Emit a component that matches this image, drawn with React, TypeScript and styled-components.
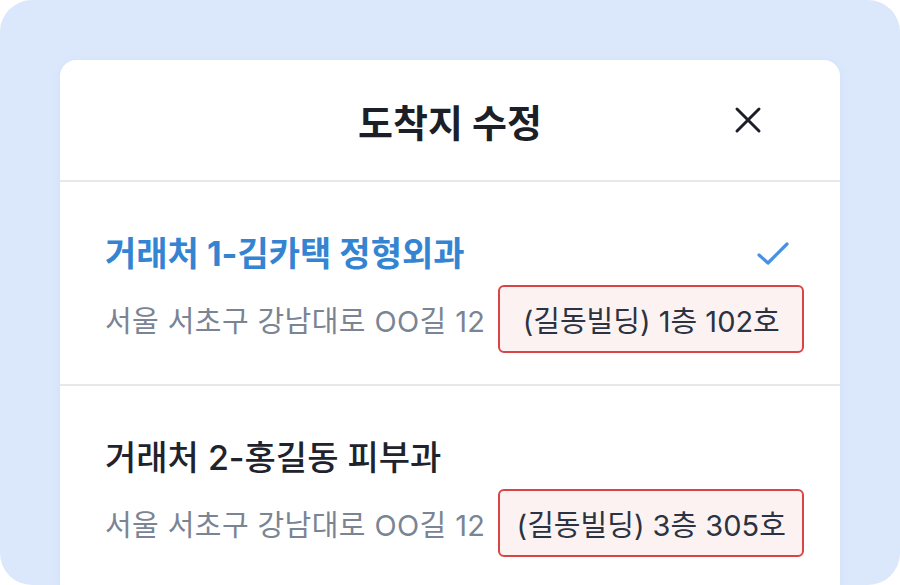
import React from 'react';
import styled, { createGlobalStyle } from 'styled-components';

const GlobalStyle = createGlobalStyle`
  html, body {
    margin: 0;
    padding: 0;
    background: #ffffff;
  }
  body {
    font-family: Inter, "Noto Sans CJK KR", sans-serif;
  }
`;

export const Frame = styled.div`
  width: 900px;
  height: 585px;
  box-sizing: border-box;
  background: #dbe8fc;
  border-radius: 32px;
  overflow: hidden;
  padding: 60px 60px 0 60px;
`;

export const Sheet = styled.div`
  height: 100%;
  background: #ffffff;
  border-radius: 16px 16px 0 0;
  box-shadow: 0 2px 10px rgba(90, 120, 170, 0.08);
  display: flex;
  flex-direction: column;
`;

export const SheetHeader = styled.div`
  height: 120px;
  flex-shrink: 0;
  display: flex;
  align-items: center;
  justify-content: center;
  position: relative;
  border-bottom: 2px solid #e6e8ec;
`;

export const SheetTitle = styled.h1`
  margin: 0;
  font-size: 38px;
  font-weight: 700;
  color: #1c1f27;
`;

export const CloseButton = styled.button`
  position: absolute;
  right: 75px;
  top: 50%;
  transform: translateY(-50%);
  width: 34px;
  height: 34px;
  padding: 0;
  border: none;
  background: transparent;
  display: flex;
  align-items: center;
  justify-content: center;
  cursor: pointer;
`;

export const Row = styled.div<{ $last?: boolean }>`
  padding: 52px 36px 31px 45px;
  display: flex;
  flex-direction: column;
  gap: 11px;
  border-bottom: ${p => (p.$last ? 'none' : '2px solid #e6e8ec')};
`;

export const RowTop = styled.div`
  display: flex;
  align-items: center;
  justify-content: space-between;
  height: 40px;
`;

export const PlaceName = styled.div<{ $active?: boolean }>`
  font-size: 34px;
  line-height: 40px;
  font-weight: ${p => (p.$active ? 700 : 500)};
  color: ${p => (p.$active ? '#3584d2' : '#1f232d')};
`;

export const CheckMark = styled.span`
  display: flex;
  margin-right: 14px;
`;

export const AddressLine = styled.div`
  display: flex;
  align-items: center;
  gap: 13px;
`;

export const Address = styled.span`
  font-size: 29px;
  letter-spacing: 0.4px;
  color: #7a8494;
  white-space: nowrap;
`;

export const DetailBadge = styled.span`
  box-sizing: border-box;
  width: 306px;
  height: 68px;
  display: flex;
  align-items: center;
  justify-content: center;
  background: #fdf2f2;
  border: 2px solid #d94545;
  border-radius: 6px;
  font-size: 29px;
  font-weight: 400;
  color: #2b3342;
  white-space: nowrap;
`;

type TPlace = {
  name: string;
  address: string;
  detail: string;
  active?: boolean;
};

const places: TPlace[] = [
  { name: '거래처 1-김카택 정형외과', address: '서울 서초구 강남대로 OO길 12', detail: '(길동빌딩) 1층 102호', active: true },
  { name: '거래처 2-홍길동 피부과', address: '서울 서초구 강남대로 OO길 12', detail: '(길동빌딩) 3층 305호' },
];

const CloseIcon = () => (
  <svg width="30" height="30" viewBox="0 0 30 30" fill="none">
    <path d="M4 4L26 26M26 4L4 26" stroke="#1c1f27" strokeWidth="3" strokeLinecap="round" />
  </svg>
);

const CheckIcon = () => (
  <svg width="34" height="26" viewBox="0 0 34 26" fill="none">
    <path d="M3 14L12 22L31 3" stroke="#4a90e2" strokeWidth="3.2" strokeLinecap="round" strokeLinejoin="round" />
  </svg>
);

const App = (): React.ReactElement => {
  return (
    <>
      <GlobalStyle />
      <Frame>
        <Sheet>
          <SheetHeader>
            <SheetTitle>도착지 수정</SheetTitle>
            <CloseButton aria-label="닫기">
              <CloseIcon />
            </CloseButton>
          </SheetHeader>
          {places.map((p, i) => (
            <Row key={p.name} $last={i === places.length - 1}>
              <RowTop>
                <PlaceName $active={p.active}>{p.name}</PlaceName>
                {p.active && (
                  <CheckMark>
                    <CheckIcon />
                  </CheckMark>
                )}
              </RowTop>
              <AddressLine>
                <Address>{p.address}</Address>
                <DetailBadge>{p.detail}</DetailBadge>
              </AddressLine>
            </Row>
          ))}
        </Sheet>
      </Frame>
    </>
  );
};

export default App;
